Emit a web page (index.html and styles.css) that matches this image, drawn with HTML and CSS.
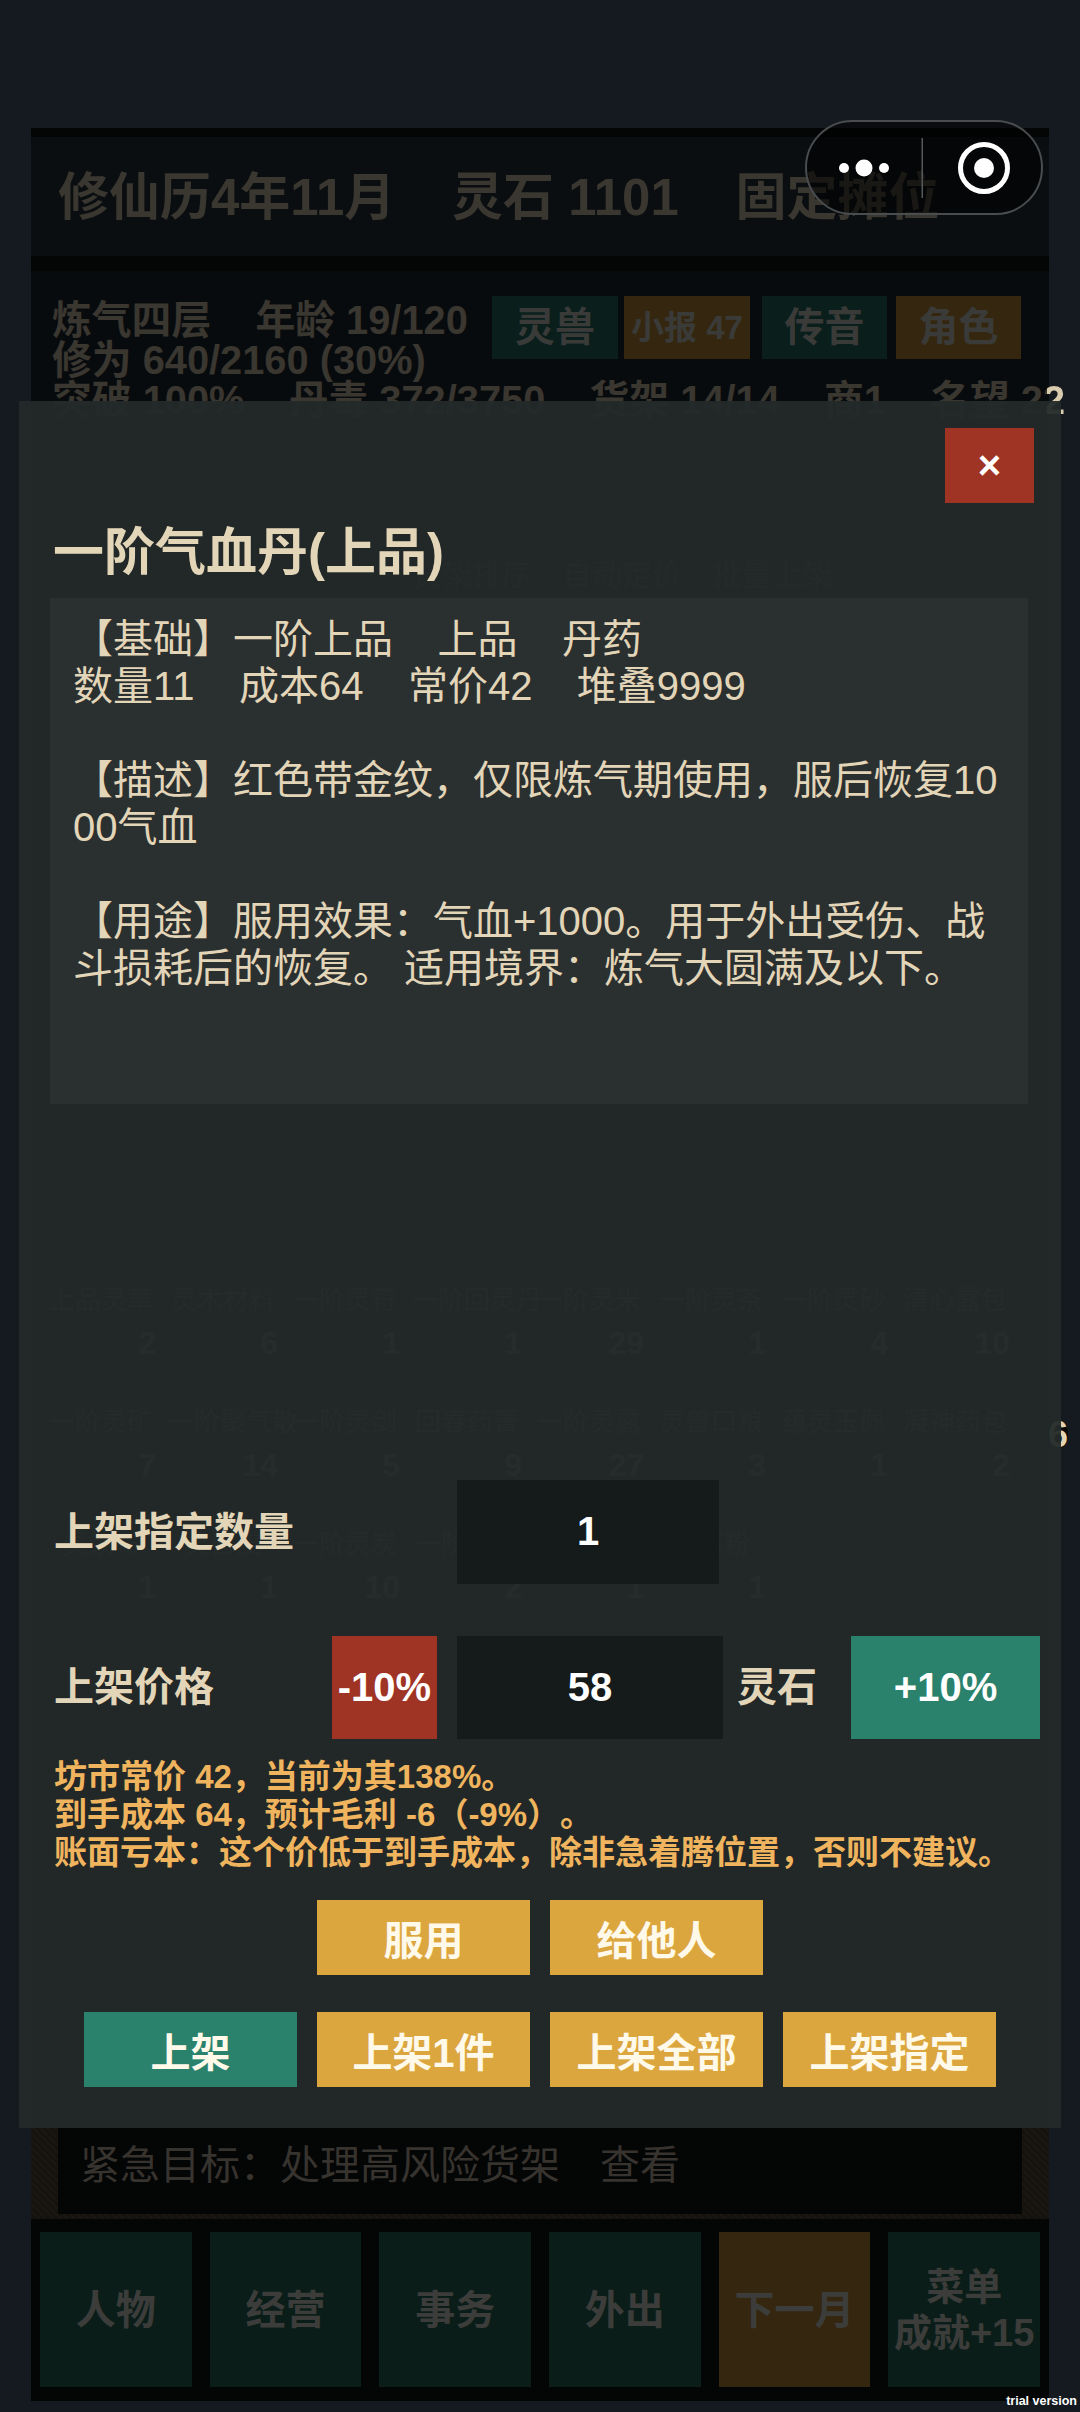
FILE: index.html
```html
<!DOCTYPE html>
<html lang="zh-CN">
<head>
  <meta charset="UTF-8">
  <meta name="viewport" content="width=device-width, initial-scale=1.0">
  <title>一阶气血丹</title>
  <link rel="stylesheet" href="styles.css">
</head>
<body>
  <div class="game">
    <div class="top-bar">修仙历4年11月&nbsp;&nbsp;&nbsp;&nbsp;灵石 1101&nbsp;&nbsp;&nbsp;&nbsp;固定摊位</div>

    <div class="status">
      <div class="chips">
        <div class="chip teal">灵兽</div>
        <div class="chip gold small">小报 47</div>
        <div class="chip teal">传音</div>
        <div class="chip gold">角色</div>
      </div>
      <div class="status-lines">
        炼气四层&nbsp;&nbsp;&nbsp;&nbsp;年龄 19/120<br>
        修为 640/2160 (30%)<br>
        突破 100%&nbsp;&nbsp;&nbsp;&nbsp;丹毒 372/3750&nbsp;&nbsp;&nbsp;&nbsp;货架 14/14&nbsp;&nbsp;&nbsp;&nbsp;商1&nbsp;&nbsp;&nbsp;&nbsp;名望 2<span class="edge">2</span>
      </div>
      <div class="shelf-tools">货架排序　自动定价　批量上架</div>
      <div class="shelf">
        <div class="cell"><div class="cell-name">上品灵草</div><div class="cell-num">2</div></div>
        <div class="cell"><div class="cell-name">灵木材料</div><div class="cell-num">6</div></div>
        <div class="cell"><div class="cell-name">一阶灵符</div><div class="cell-num">1</div></div>
        <div class="cell"><div class="cell-name">一阶回灵丹</div><div class="cell-num">1</div></div>
        <div class="cell"><div class="cell-name">一阶灵米</div><div class="cell-num">29</div></div>
        <div class="cell"><div class="cell-name">一阶灵茶</div><div class="cell-num">1</div></div>
        <div class="cell"><div class="cell-name">一阶灵砂</div><div class="cell-num">4</div></div>
        <div class="cell"><div class="cell-name">清心露包</div><div class="cell-num">10</div></div>
        <div class="cell"><div class="cell-name">一阶灵矿</div><div class="cell-num">7</div></div>
        <div class="cell"><div class="cell-name">一阶聚气散</div><div class="cell-num">14</div></div>
        <div class="cell"><div class="cell-name">一阶灵剑</div><div class="cell-num">5</div></div>
        <div class="cell"><div class="cell-name">回春药膏</div><div class="cell-num">9</div></div>
        <div class="cell"><div class="cell-name">一阶灵露</div><div class="cell-num">27</div></div>
        <div class="cell"><div class="cell-name">灵兽口粮</div><div class="cell-num">3</div></div>
        <div class="cell"><div class="cell-name">蕴灵玉佩</div><div class="cell-num">1</div></div>
        <div class="cell"><div class="cell-name">凝神药包</div><div class="cell-num">2</div></div>
        <div class="cell"><div class="cell-name">灵纹布</div><div class="cell-num">1</div></div>
        <div class="cell"><div class="cell-name">灵兽皮</div><div class="cell-num">1</div></div>
        <div class="cell"><div class="cell-name">一阶灵炭</div><div class="cell-num">10</div></div>
        <div class="cell"><div class="cell-name">一阶灵针</div><div class="cell-num">2</div></div>
        <div class="cell"><div class="cell-name">灵泉水</div><div class="cell-num">1</div></div>
        <div class="cell"><div class="cell-name">灵石粉</div><div class="cell-num">1</div></div>
      </div>
    </div>

    <div class="urgent">
      <div class="urgent-inner">紧急目标：处理高风险货架　查看</div>
    </div>

    <div class="nav">
      <div class="nav-btn">人物</div>
      <div class="nav-btn">经营</div>
      <div class="nav-btn">事务</div>
      <div class="nav-btn">外出</div>
      <div class="nav-btn next">下一月</div>
      <div class="nav-btn menu">菜单<br>成就+15</div>
    </div>
  </div>

  <span class="side-digit">6</span>

  <!-- 物品详情弹窗 -->
  <div class="modal">
    <div class="modal-head">
      <button class="close">×</button>
    </div>
    <h2 class="item-title">一阶气血丹(上品)</h2>
    <div class="item-info">【基础】一阶上品    上品    丹药
数量11    成本64    常价42    堆叠9999

【描述】红色带金纹，仅限炼气期使用，服后恢复1000气血

【用途】服用效果：气血+1000。用于外出受伤、战斗损耗后的恢复。 适用境界：炼气大圆满及以下。</div>

    <div class="form-row qty-row">
      <label class="form-label qty-label">上架指定数量</label>
      <div class="num-box qty-box">1</div>
    </div>

    <div class="form-row price-row">
      <label class="form-label price-label">上架价格</label>
      <button class="step minus">-10%</button>
      <div class="num-box price-box">58</div>
      <span class="form-label unit">灵石</span>
      <button class="step plus">+10%</button>
    </div>

    <div class="price-note">坊市常价 42，当前为其138%。<br>到手成本 64，预计毛利 -6（-9%）。<br>账面亏本：这个价低于到手成本，除非急着腾位置，否则不建议。</div>

    <div class="btn-row first">
      <button class="act">服用</button>
      <button class="act">给他人</button>
    </div>
    <div class="btn-row">
      <button class="act green">上架</button>
      <button class="act">上架1件</button>
      <button class="act">上架全部</button>
      <button class="act">上架指定</button>
    </div>
  </div>

  <!-- 小程序胶囊按钮 -->
  <div class="capsule">
    <svg width="238" height="95" viewBox="0 0 238 95">
      <circle cx="39" cy="48" r="5" fill="#fff"/>
      <circle cx="59" cy="48" r="8.5" fill="#fff"/>
      <circle cx="79" cy="48" r="5" fill="#fff"/>
      <rect x="116.5" y="18" width="1.5" height="60" fill="#55595a"/>
      <circle cx="179" cy="48" r="23.5" fill="none" stroke="#fff" stroke-width="5"/>
      <circle cx="179" cy="48" r="10" fill="#fff"/>
    </svg>
  </div>

  <div class="trial">trial version</div>
</body>
</html>
```

FILE: styles.css
```css
* {
  box-sizing: border-box;
}
html, body {
  margin: 0;
  padding: 0;
}
body {
  position: relative;
  width: 1080px;
  height: 2412px;
  overflow: hidden;
  background-color: #141a1f;
  font-family: "Liberation Sans", "Noto Sans CJK SC", sans-serif;
  color: #3a3630;
  text-spacing-trim: space-all;
}

/* 底层游戏界面（被遮罩压暗） */
.game {
  display: flex;
  flex-direction: column;
  height: 2273px;
  margin: 128px 31px 0;
  padding-top: 9px;
  background-color: #040505;
}
.top-bar {
  height: 119px;
  padding: 31px 0 0 27px;
  background-color: #0a0e10;
  font-size: 51px;
  line-height: 60px;
  font-weight: bold;
  white-space: nowrap;
}
.status {
  flex: 1;
  min-height: 0;
  margin-top: 15px;
  padding: 29px 0 0 21px;
  background-color: #080b0d;
  overflow: visible;
}
.chips {
  float: right;
  display: flex;
  margin: -4px 28px 0 0;
}
.chip {
  width: 126px;
  height: 63px;
  margin-left: 6px;
  background-color: #0a1f1c;
  color: #3a3b39;
  font-size: 40px;
  line-height: 63px;
  font-weight: bold;
  text-align: center;
}
.chip:nth-child(3) {
  margin-left: 12px;
  width: 125px;
}
.chip:nth-child(4) {
  margin-left: 9px;
  width: 125px;
}
.gold {
  background-color: #35270f;
}
.chip.small {
  font-size: 33px;
}
.status-lines {
  font-size: 39.8px;
  line-height: 40px;
  font-weight: bold;
  white-space: nowrap;
}
.edge {
  background: linear-gradient(90deg, #3a3630 4px, #d8cbae 4px);
  -webkit-background-clip: text;
  background-clip: text;
  color: transparent;
}
.shelf-tools {
  margin: 140px 0 0 360px;
  font-size: 30px;
  line-height: 30px;
  color: #35342f;
}
.shelf {
  display: grid;
  grid-template-columns: repeat(8, 110px);
  column-gap: 12px;
  row-gap: 42px;
  margin: 692px 0 0 -6px;
}
.cell-name {
  height: 42px;
  font-size: 26px;
  line-height: 36px;
  color: #3f3e3a;
  white-space: nowrap;
  text-align: center;
}
.cell-num {
  height: 38px;
  background-color: #0a0d0e;
  font-size: 32px;
  line-height: 38px;
  font-weight: bold;
  color: #55524c;
  text-align: right;
}
.urgent {
  height: 99px;
  padding: 0 27px 5px;
  background-color: #16120e;
  background-image: repeating-linear-gradient(45deg, rgba(255, 235, 200, 0.02) 0 2px, transparent 2px 5px);
}
.urgent-inner {
  height: 94px;
  padding: 25px 0 0 22px;
  background-color: #040505;
  font-size: 40px;
  line-height: 40px;
  color: #37332e;
}
.nav {
  display: grid;
  grid-template-columns: repeat(6, 1fr);
  column-gap: 18px;
  height: 182px;
  padding: 13px 9px 14px;
}
.nav-btn {
  display: flex;
  align-items: center;
  justify-content: center;
  background-color: #0b1d19;
  color: #3c3d3b;
  font-size: 40px;
  line-height: 46px;
  font-weight: bold;
  text-align: center;
}
.next {
  background-color: #35260f;
}
.menu {
  font-size: 38px;
}
.side-digit {
  position: absolute;
  left: 1039px;
  top: 1420px;
  width: 29px;
  height: 30px;
  border-radius: 14px;
  background-color: #07090a;
  color: #e3d5b5;
  font-size: 36px;
  line-height: 30px;
  font-weight: bold;
  text-align: right;
}

/* 弹窗 */
.modal {
  position: absolute;
  left: 19px;
  top: 401px;
  width: 1042px;
  height: 1727px;
  padding: 27px 0 0 31px;
  background-color: rgba(35, 42, 41, 0.95);
  color: #e3d5b8;
}
.modal-head {
  display: flex;
  justify-content: flex-end;
  padding-right: 27px;
}
.close {
  width: 89px;
  height: 75px;
  padding: 0;
  border: none;
  background-color: #9f3324;
  color: #fff;
  font-family: inherit;
  font-size: 40px;
  font-weight: bold;
}
.item-title {
  margin: 22px 0 0 3px;
  font-size: 51px;
  line-height: 56px;
  font-weight: bold;
}
.item-info {
  width: 978px;
  height: 506px;
  margin-top: 17px;
  padding: 18px 24px 0 23px;
  background-color: #2a3030;
  font-size: 40px;
  line-height: 47px;
  white-space: pre-wrap;
  word-break: break-all;
}
.form-row {
  display: flex;
  align-items: center;
  margin-left: 4px;
}
.qty-row {
  height: 104px;
  margin-top: 376px;
}
.price-row {
  height: 103px;
  margin-top: 52px;
}
.form-label {
  margin-bottom: 7px;
  font-size: 40px;
  font-weight: bold;
}
.qty-label {
  width: 403px;
}
.price-label {
  width: 278px;
}
.num-box {
  height: 100%;
  background-color: #151b1b;
  color: #fff;
  font-size: 40px;
  font-weight: bold;
  line-height: 103px;
  text-align: center;
}
.qty-box {
  width: 262px;
}
.price-box {
  width: 266px;
}
.step {
  height: 100%;
  padding: 0;
  border: none;
  color: #fff;
  font-family: inherit;
  font-size: 40px;
  font-weight: bold;
}
.minus {
  width: 105px;
  margin-right: 20px;
  background-color: #9f3324;
}
.plus {
  width: 189px;
  background-color: #2a826c;
}
.unit {
  width: 80px;
  margin: 0 34px 7px 14px;
}
.price-note {
  margin: 19px 0 0 4px;
  color: #f0b45e;
  font-size: 33px;
  line-height: 38px;
  font-weight: bold;
  white-space: nowrap;
}
.btn-row {
  display: flex;
  justify-content: center;
  column-gap: 20px;
  margin: 37px 0 0 -31px;
}
.btn-row.first {
  margin-top: 28px;
}
.act {
  width: 213px;
  height: 75px;
  padding: 0;
  border: none;
  background-color: #dca63f;
  color: #fff9ea;
  font-family: inherit;
  font-size: 40px;
  font-weight: bold;
}
.act.green {
  background-color: #2a826c;
}

.capsule {
  position: absolute;
  left: 805px;
  top: 120px;
  width: 238px;
  height: 95px;
  border: 2.5px solid #494d4f;
  border-radius: 48px;
  background-color: rgba(0, 0, 0, 0.55);
}
.capsule svg {
  display: block;
  margin: -2.5px;
}
.trial {
  position: absolute;
  right: 3px;
  bottom: 3px;
  color: #fff;
  font-size: 12.5px;
  line-height: 16px;
  font-weight: bold;
}
```
